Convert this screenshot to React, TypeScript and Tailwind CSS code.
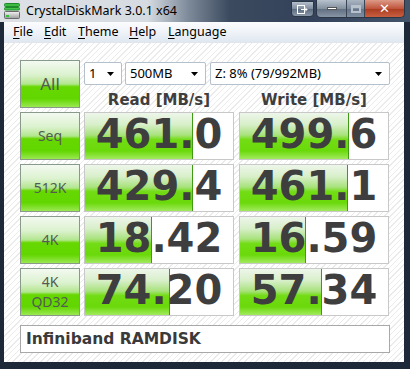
import React from "react";

const ROWS = [
  { label: ["Seq"], read: "461.0", write: "499.6" },
  { label: ["512K"], read: "429.4", write: "461.1" },
  { label: ["4K"], read: "18.42", write: "16.59" },
  { label: ["4K", "QD32"], read: "74.20", write: "57.34" },
];

// CrystalDiskMark bar: log scale, 0.1 .. 10000 MB/s
const barWidth = (v: string) => Math.round((Math.log10(parseFloat(v) * 10) / 5) * 148);

function GreenButton({ children }: { children: React.ReactNode }) {
  return (
    <div className="flex h-[48px] w-[60px] shrink-0 flex-col items-center justify-center border border-[#8a9a8a] bg-[linear-gradient(to_bottom,#f3f9f1_0%,#dcf2cf_30%,#b2e68e_50%,#66d800_56%,#62d600_82%,#9be852_100%)] text-[#525c52] font-['Comic_Sans_MS','Noto_Sans',sans-serif]">
      {children}
    </div>
  );
}

function ScoreBox({ value }: { value: string }) {
  return (
    <div className="relative h-[48px] w-[150px] shrink-0 overflow-hidden border border-[#c8c8c8] bg-white">
      <div
        className="absolute left-0 top-0 bottom-0 border-r border-[#3f9a14] bg-[linear-gradient(to_bottom,#eef6ea_0%,#d8efca_25%,#a8e27c_48%,#72dc14_58%,#6ad90a_82%,#a2ea5e_100%)]"
        style={{ width: barWidth(value) }}
      />
      <div className="relative text-center text-[40px] font-bold leading-[42px] text-[#3e3e3e] font-['DejaVu_Sans',sans-serif]">
        {value}
      </div>
    </div>
  );
}

function Select({ w, text }: { w: string; text: string }) {
  return (
    <div className={`flex h-[23px] ${w} shrink-0 items-center justify-between rounded-[2px] border border-[#b4c0cc] bg-white pl-[4px] pr-[7px] text-[13px] text-black`}>
      <span>{text}</span>
      <svg width="7" height="4" viewBox="0 0 7 4">
        <path d="M0 0h7L3.5 4z" fill="#000" />
      </svg>
    </div>
  );
}

function MenuItem({ w, text }: { w: string; text: string }) {
  return (
    <span className={`${w} shrink-0`}>
      <u className="decoration-1 underline-offset-2">{text[0]}</u>
      {text.slice(1)}
    </span>
  );
}

export default function App() {
  return (
    <div className="flex h-[369px] w-[410px] flex-col overflow-hidden bg-[#1d2938] font-['Noto_Sans',sans-serif]">
      {/* title bar */}
      <div className="flex h-[22px] shrink-0 items-start bg-[linear-gradient(to_right,#dde1e6_0%,#d6dbe1_36%,#7d8a9a_46%,#3b4a5e_56%,#33425a_75%,#43536a_100%)]">
        <svg className="ml-[4px] mt-[3px]" width="16" height="16" viewBox="0 0 16 16">
          <defs>
            <linearGradient id="disk" x1="0" y1="0" x2="0" y2="1">
              <stop offset="0" stopColor="#f4f4f4" />
              <stop offset="1" stopColor="#9c9c9c" />
            </linearGradient>
          </defs>
          <rect x="0.5" y="0.5" width="15" height="3" rx="1" fill="#3dbb45" stroke="#1f8a2a" />
          <rect x="0.5" y="4.5" width="15" height="2.5" rx="1" fill="#46c44e" stroke="#1f8a2a" />
          <rect x="0.5" y="8.5" width="15" height="7" rx="1" fill="url(#disk)" stroke="#6a6a6a" />
          <rect x="2" y="12" width="3" height="2" fill="#38c040" />
        </svg>
        <span className="ml-[6px] mt-[2px] text-[12.5px] leading-[18px] text-black">
          CrystalDiskMark 3.0.1 x64
        </span>
        <div className="ml-auto flex items-start">
          <div className="mt-[1px] flex h-[16px] w-[23px] items-center justify-center rounded-b-[4px] border border-[#2b3645] bg-[linear-gradient(to_bottom,#b4bfcc,#7d8b9d_50%,#5c6b7e_51%,#8a98aa)]">
            <svg width="11" height="9" viewBox="0 0 11 9">
              <rect x="0.5" y="0.5" width="7" height="8" fill="none" stroke="#fff" />
              <path d="M4 4.5h6M8 2.5l2 2-2 2" fill="none" stroke="#fff" />
            </svg>
          </div>
          <div className="ml-[2px] mr-[5px] flex h-[18px] overflow-hidden rounded-b-[5px] border border-t-0 border-[#2b3645]">
            <div className="flex w-[30px] items-center justify-center border-r border-[#3a4656] bg-[linear-gradient(to_bottom,#b8c2ce,#84919f_50%,#5f6d80_51%,#8895a6)]">
              <div className="h-[3px] w-[10px] border border-[#555] bg-white" />
            </div>
            <div className="flex w-[18px] items-center justify-center border-r border-[#3a4656] bg-[linear-gradient(to_bottom,#aab5c2,#7f8c9c_50%,#66748a_51%,#808ea0)]">
              <div className="h-[8px] w-[10px] border-2 border-t-[3px] border-[#b8c2cc]" />
            </div>
            <div className="flex w-[39px] items-center justify-center bg-[linear-gradient(to_bottom,#dc9a88,#c0553c_50%,#a83a20_51%,#c8603f)]">
              <span className="text-[13px] font-bold leading-none text-white font-['DejaVu_Sans',sans-serif]">
                ✕
              </span>
            </div>
          </div>
        </div>
      </div>

      <div className="ml-[4px] mr-[6px] mb-[7px] flex flex-1 flex-col overflow-hidden">
        {/* menu bar */}
        <div className="flex h-[21px] shrink-0 items-center bg-[linear-gradient(to_bottom,#fbfcfe,#edf1f7_55%,#dfe6ef)] pl-[9px] text-[12.5px] text-black">
          <MenuItem w="w-[31px]" text="File" />
          <MenuItem w="w-[34px]" text="Edit" />
          <MenuItem w="w-[51px]" text="Theme" />
          <MenuItem w="w-[39px]" text="Help" />
          <MenuItem w="w-[70px]" text="Language" />
        </div>

        {/* content */}
        <div className="flex flex-1 flex-col bg-white bg-[repeating-linear-gradient(135deg,#ffffff_0px,#ffffff_3px,#ebebeb_3px,#ebebeb_4px)] pl-[16px] pt-[17px]">
          <div className="flex h-[48px]">
            <GreenButton>
              <span className="text-[17px]">All</span>
            </GreenButton>
            <div className="ml-[4px] flex flex-col">
              <div className="mt-[2px] flex">
                <Select w="w-[38px]" text="1" />
                <div className="ml-[3px]">
                  <Select w="w-[81px]" text="500MB" />
                </div>
                <div className="ml-[4px]">
                  <Select w="w-[180px]" text="Z: 8% (79/992MB)" />
                </div>
              </div>
              <div className="mt-[3px] flex h-[20px] text-[15px] font-bold leading-[24px] text-[#3e3e3e] font-['DejaVu_Sans',sans-serif]">
                <div className="w-[150px] text-center">Read [MB/s]</div>
                <div className="ml-[5px] w-[150px] text-center">Write [MB/s]</div>
              </div>
            </div>
          </div>

          {ROWS.map((r) => (
            <div key={r.read} className="mt-[4px] flex h-[48px]">
              <GreenButton>
                {r.label.map((l) => (
                  <span key={l} className="text-[14px] leading-[20px]">
                    {l}
                  </span>
                ))}
              </GreenButton>
              <div className="ml-[4px]">
                <ScoreBox value={r.read} />
              </div>
              <div className="ml-[5px]">
                <ScoreBox value={r.write} />
              </div>
            </div>
          ))}

          <div className="mt-[9px] h-[28px] w-[370px] border border-[#a8a8a8] bg-white pl-[5px] text-[15.5px] font-bold leading-[26px] text-[#3a3a3a] font-['DejaVu_Sans',sans-serif]">
            Infiniband RAMDISK
          </div>
        </div>
      </div>
    </div>
  );
}
